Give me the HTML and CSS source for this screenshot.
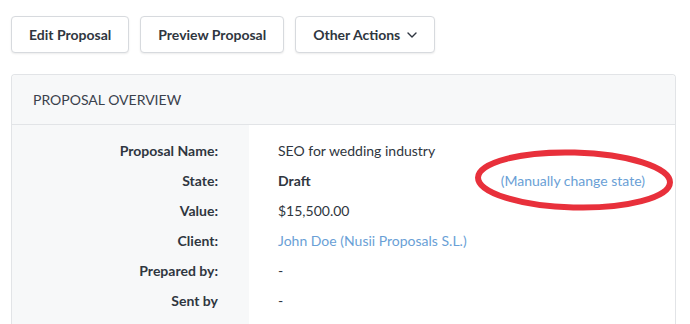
FILE: index.html
```html
<!DOCTYPE html>
<html lang="en">
<head>
    <meta charset="UTF-8">
    <title>Proposal overview</title>
    <link rel="stylesheet" href="styles.css">
</head>
<body>
<div class="actions">
    <button class="btn">Edit Proposal</button>
    <button class="btn">Preview Proposal</button>
    <button class="btn">Other Actions
        <svg class="caret" width="10" height="6" viewBox="0 0 10 6"><path d="M1 1l4 4 4-4" fill="none" stroke="#2f3640" stroke-width="1.4" stroke-linecap="round" stroke-linejoin="round"/></svg>
    </button>
</div>

<div class="panel">
    <div class="panel-header">Proposal Overview</div>
    <div class="overview">
        <div class="labels">
            <div class="row">Proposal Name:</div>
            <div class="row">State:</div>
            <div class="row">Value:</div>
            <div class="row">Client:</div>
            <div class="row">Prepared by:</div>
            <div class="row">Sent by</div>
        </div>
        <div class="values">
            <div class="row">SEO for wedding industry</div>
            <div class="row state-row">
                <strong>Draft</strong>
                <a href="#" class="link">(Manually change state)</a>
                <!-- annotation circle -->
                <svg class="mark" width="204" height="66" viewBox="0 0 204 66">
                    <ellipse cx="101" cy="33" rx="96" ry="27.5" fill="none" stroke="#e8303b" stroke-width="6" transform="rotate(1.5 101 33)"/>
                </svg>
            </div>
            <div class="row">$15,500.00</div>
            <div class="row"><a href="#" class="link">John Doe (Nusii Proposals S.L.)</a></div>
            <div class="row">-</div>
            <div class="row">-</div>
        </div>
    </div>
</div>
</body>
</html>
```

FILE: styles.css
```css
body {
    font-family: Lato, "Open Sans", sans-serif;
    font-size: 14px;
    margin: 0;
    color: #2f3640;
    background: #fff;
}

.actions {
    display: flex;
    gap: 11px;
    padding: 16px 11px 0;
}

.btn {
    height: 37px;
    padding: 0 17px;
    background: #fff;
    border: 1px solid #d7dade;
    border-radius: 4px;
    box-shadow: 0 1px 2px rgba(0, 0, 0, 0.08);
    font-family: inherit;
    font-size: 14px;
    font-weight: bold;
    color: #2f3640;
    display: flex;
    align-items: center;
    gap: 7px;
}

.caret {
    margin-top: 1px;
}

.panel {
    margin: 21px 14px 0 11px;
    border: 1px solid #e2e4e7;
    border-bottom: none;
    border-radius: 4px 4px 0 0;
    height: 260px;
}

.panel-header {
    height: 49px;
    display: flex;
    align-items: center;
    padding-left: 21px;
    background: #f7f8f9;
    border-bottom: 1px solid #e2e4e7;
    text-transform: uppercase;
    color: #3a414c;
    border-radius: 4px 4px 0 0;
}

.overview {
    display: grid;
    grid-template-columns: 237px 1fr;
    height: 210px;
}

.labels {
    background: #f7f8f9;
    padding: 11px 31px 0 0;
    text-align: right;
    font-weight: bold;
}

.values {
    padding: 11px 30px 0 29px;
}

.row {
    height: 30px;
    line-height: 30px;
}

.state-row {
    display: flex;
    justify-content: space-between;
    position: relative;
}

.link {
    color: #6a9fd6;
    text-decoration: none;
}

.mark {
    position: absolute;
    right: -32px;
    top: -19px;
}
```
